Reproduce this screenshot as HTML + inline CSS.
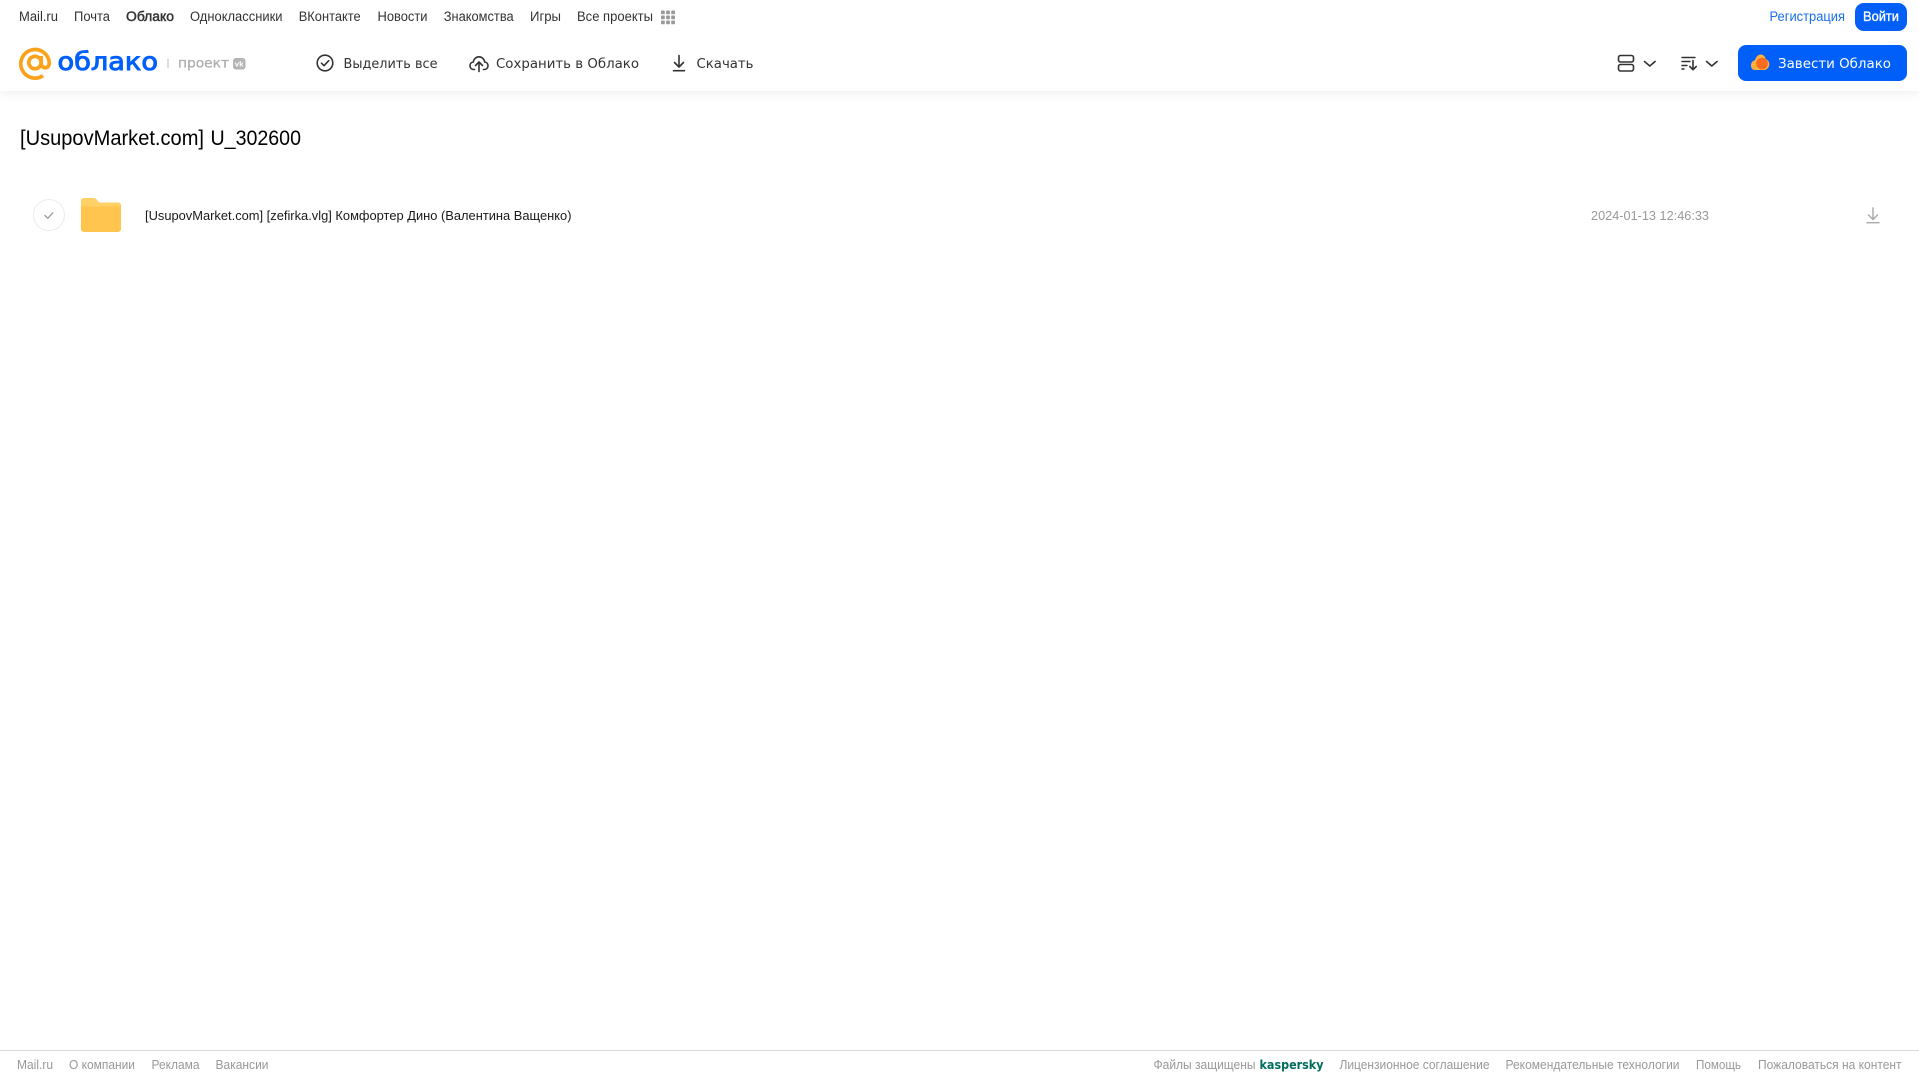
<!DOCTYPE html>
<html lang="ru"><head><meta charset="utf-8"><title>Облако</title>
<style>
html,body{margin:0;padding:0;width:1919px;height:1079px;overflow:hidden;background:#fff}
#hdr{position:absolute;left:0;top:0;width:1919px;height:91px;background:#fff;box-shadow:0 2px 10px rgba(0,0,0,.07)}
#ftr{position:absolute;left:0;top:1050px;width:1919px;height:29px;border-top:1px solid #d9d9d9;box-sizing:border-box}
svg{position:absolute;left:0;top:0}
text{font-family:"Liberation Sans",Arial,sans-serif;white-space:pre}
.n{font-size:13.500px;fill:#333}
.t{font-size:13px;fill:#333;font-family:"DejaVu Sans",sans-serif}
.f{font-size:12.500px;fill:#999}
</style></head><body>
<div id="hdr"></div><div id="ftr"></div>
<svg width="1919" height="1079" viewBox="0 0 1919 1079" xmlns="http://www.w3.org/2000/svg">
<!-- top nav -->
<g class="nav">
<text class="n" x="19" y="21" textLength="39" lengthAdjust="spacingAndGlyphs">Mail.ru</text>
<text class="n" x="74" y="21" textLength="36" lengthAdjust="spacingAndGlyphs">Почта</text>
<text class="n" x="126" y="21" textLength="48" lengthAdjust="spacingAndGlyphs" stroke="#333" stroke-width=".45">Облако</text>
<text class="n" x="190" y="21" textLength="92.500" lengthAdjust="spacingAndGlyphs">Одноклассники</text>
<text class="n" x="298.700" y="21" textLength="62" lengthAdjust="spacingAndGlyphs">ВКонтакте</text>
<text class="n" x="377.500" y="21" textLength="50" lengthAdjust="spacingAndGlyphs">Новости</text>
<text class="n" x="443.700" y="21" textLength="70" lengthAdjust="spacingAndGlyphs">Знакомства</text>
<text class="n" x="530" y="21" textLength="31" lengthAdjust="spacingAndGlyphs">Игры</text>
<text class="n" x="577" y="21" textLength="76" lengthAdjust="spacingAndGlyphs">Все проекты</text>
<g fill="#9a9a9a">
<rect x="661" y="10.500" width="3.800" height="3.800" rx=".8"/><rect x="666.100" y="10.500" width="3.800" height="3.800" rx=".8"/><rect x="671.200" y="10.500" width="3.800" height="3.800" rx=".8"/>
<rect x="661" y="15.500" width="3.800" height="3.800" rx=".8"/><rect x="666.100" y="15.500" width="3.800" height="3.800" rx=".8"/><rect x="671.200" y="15.500" width="3.800" height="3.800" rx=".8"/>
<rect x="661" y="20.500" width="3.800" height="3.800" rx=".8"/><rect x="666.100" y="20.500" width="3.800" height="3.800" rx=".8"/><rect x="671.200" y="20.500" width="3.800" height="3.800" rx=".8"/>
</g>
<text x="1769.500" y="21" font-size="13.500" fill="#1a6fe8" textLength="75.500" lengthAdjust="spacingAndGlyphs">Регистрация</text>
<rect x="1855" y="3" width="52" height="28" rx="9" fill="#005ff9"/>
<text x="1863" y="21" font-size="13.500" fill="#fff" stroke="#fff" stroke-width=".35" textLength="36" lengthAdjust="spacingAndGlyphs">Войти</text>
</g>
<!-- logo -->
<g fill="none" stroke="#faa21b" stroke-width="3.700">
<circle cx="35" cy="62.500" r="6.200"/>
<path d="M43 75.700A14.300 14.300 0 1 1 49.300 62.500c0 3.500-1.600 5.200-4 5.200s-4.100-1.900-4.100-4.400V56"/>
</g>
<text x="57.500" y="70" font-size="25" fill="#005ff9" stroke="#005ff9" stroke-width=".95" style="font-family:'DejaVu Sans',sans-serif" textLength="100.500" lengthAdjust="spacingAndGlyphs">облако</text>
<rect x="167.500" y="59" width="1" height="9" fill="#bbb"/>
<text x="178" y="67.500" font-size="13.500" fill="#aeaeae" stroke="#aeaeae" stroke-width=".3" style="font-family:'DejaVu Sans',sans-serif" textLength="51" lengthAdjust="spacingAndGlyphs">проект</text>
<rect x="233" y="58" width="12.500" height="11.500" rx="3" fill="#b4b4b4"/>
<text x="234.700" y="66.500" font-size="7.500" fill="#fff" style="font-weight:700" textLength="9" lengthAdjust="spacingAndGlyphs">vk</text>
<!-- toolbar -->
<g fill="none" stroke="#333" stroke-width="1.600" stroke-linecap="round" stroke-linejoin="round">
<circle cx="325" cy="63" r="7.800"/>
<path d="M321.500 63.200l2.500 2.500 4.700-5"/>
<path d="M474.500 69.500h-0.500c-2.500 0-4-1.700-4-3.800 0-2 1.400-3.500 3.300-3.700 .4-3 2.700-5.200 5.700-5.200s5.300 2.200 5.700 5.200c1.900.2 3.300 1.700 3.300 3.700 0 2.100-1.500 3.800-4 3.800h-.5"/>
<path d="M479 71.500v-9M475.500 65.500l3.500-3.500 3.500 3.500"/>
<path d="M679 55.500v11.500M674.500 62.500l4.500 4.500 4.500-4.500M673.500 70.700h11"/>
<rect x="1618.500" y="55.500" width="15" height="6.500" rx="2"/>
<rect x="1618.500" y="64.500" width="15" height="6.500" rx="2"/>
<path d="M1644.500 61.500l5.300 4.500 5.300-4.500"/>
<path d="M1682 57.500h13M1682 61.500h8M1682 65.500h5M1682 69h2" stroke-width="1.400"/>
<path d="M1693 60.500v9M1689.800 66.500l3.200 3.200 3.200-3.200"/>
<path d="M1706.500 61.500l5.300 4.500 5.300-4.500"/>
</g>
<text class="t" x="343.500" y="68" textLength="94" lengthAdjust="spacingAndGlyphs">Выделить все</text>
<text class="t" x="496" y="68" textLength="143" lengthAdjust="spacingAndGlyphs">Сохранить в Облако</text>
<text class="t" x="696.500" y="68" textLength="57" lengthAdjust="spacingAndGlyphs">Скачать</text>
<!-- CTA -->
<rect x="1738" y="45" width="169" height="36" rx="8" fill="#005ff9"/>
<path d="M1751 65.500c0-3 2-5 4-5.200 .8-3.400 3.200-5.800 5.800-5.800 2.600 0 4.300 2 4.900 4.600 2.200.6 3.600 2.800 3.600 5.200 0 3-2.200 5.700-5.200 5.700h-9.200c-2.400 0-3.900-2-3.900-4.500z" fill="#ffb13d"/>
<circle cx="1762" cy="63.500" r="5.800" fill="#f96b1f"/>
<text x="1778" y="68" font-size="13" fill="#fff" style="font-family:'DejaVu Sans',sans-serif" textLength="113" lengthAdjust="spacingAndGlyphs">Завести Облако</text>
<!-- title -->
<text x="20" y="145" font-size="21.500" fill="#000" textLength="184" lengthAdjust="spacingAndGlyphs">[UsupovMarket.com]</text>
<text x="210.500" y="145" font-size="21.500" fill="#000" textLength="90.500" lengthAdjust="spacingAndGlyphs">U_302600</text>
<!-- row -->
<circle cx="49" cy="215" r="15.500" fill="#fff" stroke="#ececec" stroke-width="1"/>
<path d="M45 215.500l2.800 2.800 5-5.500" fill="none" stroke="#999" stroke-width="1.300" stroke-linecap="round" stroke-linejoin="round"/>
<path d="M81 201a3 3 0 0 1 3-3h9c2.500 0 3.500 1 5 3.500 .5.700 1 1 2 1H118a3 3 0 0 1 3 3V229a3 3 0 0 1-3 3H84a3 3 0 0 1-3-3z" fill="#ffc54f"/>
<path d="M81 206.500h40v-1a3 3 0 0 0-3-3H100c-1 0-1.500-.3-2-1-1.500-2.500-2.500-3.500-5-3.500h-9a3 3 0 0 0-3 3z" fill="#ffd064"/>
<text x="145" y="220" font-size="13" fill="#1a1a1a" textLength="426.500" lengthAdjust="spacingAndGlyphs">[UsupovMarket.com] [zefirka.vlg] Комфортер Дино (Валентина Ващенко)</text>
<text x="1591" y="220" font-size="13" fill="#999" textLength="118" lengthAdjust="spacingAndGlyphs">2024-01-13 12:46:33</text>
<path d="M1873 208v11.500M1868.500 215l4.500 4.500 4.500-4.500M1867 222.700h12" fill="none" stroke="#a8a8a8" stroke-width="1.400" stroke-linecap="round" stroke-linejoin="round"/>
<!-- footer -->
<text class="f" x="17" y="1069" textLength="36" lengthAdjust="spacingAndGlyphs">Mail.ru</text>
<text class="f" x="69" y="1069" textLength="66" lengthAdjust="spacingAndGlyphs">О компании</text>
<text class="f" x="151.500" y="1069" textLength="48" lengthAdjust="spacingAndGlyphs">Реклама</text>
<text class="f" x="215.500" y="1069" textLength="53" lengthAdjust="spacingAndGlyphs">Вакансии</text>
<text class="f" x="1153.500" y="1069" textLength="102" lengthAdjust="spacingAndGlyphs">Файлы защищены</text>
<text x="1259.500" y="1069" font-size="12" fill="#006d5c" style="font-family:'DejaVu Sans',sans-serif;font-weight:700" textLength="64" lengthAdjust="spacingAndGlyphs">kaspersky</text>
<text class="f" x="1339.500" y="1069" textLength="150" lengthAdjust="spacingAndGlyphs">Лицензионное соглашение</text>
<text class="f" x="1505.500" y="1069" textLength="174" lengthAdjust="spacingAndGlyphs">Рекомендательные технологии</text>
<text class="f" x="1696" y="1069" textLength="45" lengthAdjust="spacingAndGlyphs">Помощь</text>
<text class="f" x="1758" y="1069" textLength="143.500" lengthAdjust="spacingAndGlyphs">Пожаловаться на контент</text>
</svg>
</body></html>
